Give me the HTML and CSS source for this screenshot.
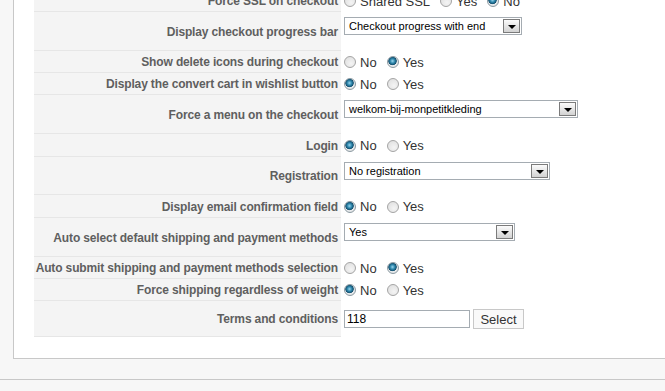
FILE: index.html
```html
<!DOCTYPE html>
<html lang="en">
<head>
  <meta charset="UTF-8">
  <title>Checkout configuration</title>
  <link rel="stylesheet" href="styles.css">
</head>
<body>
  <div class="panel">
    <div class="form">
      <div class="row row-radio">
        <div class="key">Force SSL on checkout</div>
        <div class="value">
          <label class="opt"><input type="radio" name="ssl"> Shared SSL</label>
          <label class="opt"><input type="radio" name="ssl"> Yes</label>
          <label class="opt"><input type="radio" name="ssl" checked> No</label>
        </div>
      </div>
      <div class="row row-select">
        <div class="key">Display checkout progress bar</div>
        <div class="value">
          <span class="select" style="width: 178px"><span class="select-text">Checkout progress with end</span><span class="select-btn"></span></span>
        </div>
      </div>
      <div class="row row-radio">
        <div class="key">Show delete icons during checkout</div>
        <div class="value">
          <label class="opt"><input type="radio" name="delete"> No</label>
          <label class="opt"><input type="radio" name="delete" checked> Yes</label>
        </div>
      </div>
      <div class="row row-radio">
        <div class="key">Display the convert cart in wishlist button</div>
        <div class="value">
          <label class="opt"><input type="radio" name="wishlist" checked> No</label>
          <label class="opt"><input type="radio" name="wishlist"> Yes</label>
        </div>
      </div>
      <div class="row row-select">
        <div class="key">Force a menu on the checkout</div>
        <div class="value">
          <span class="select" style="width: 234px"><span class="select-text">welkom-bij-monpetitkleding</span><span class="select-btn"></span></span>
        </div>
      </div>
      <div class="row row-radio row-loose">
        <div class="key">Login</div>
        <div class="value">
          <label class="opt"><input type="radio" name="login" checked> No</label>
          <label class="opt"><input type="radio" name="login"> Yes</label>
        </div>
      </div>
      <div class="row row-select row-short">
        <div class="key">Registration</div>
        <div class="value">
          <span class="select" style="width: 206px"><span class="select-text">No registration</span><span class="select-btn"></span></span>
        </div>
      </div>
      <div class="row row-radio row-loose">
        <div class="key">Display email confirmation field</div>
        <div class="value">
          <label class="opt"><input type="radio" name="email" checked> No</label>
          <label class="opt"><input type="radio" name="email"> Yes</label>
        </div>
      </div>
      <div class="row row-select">
        <div class="key">Auto select default shipping and payment methods</div>
        <div class="value">
          <span class="select" style="width: 171px"><span class="select-text">Yes</span><span class="select-btn"></span></span>
        </div>
      </div>
      <div class="row row-radio">
        <div class="key">Auto submit shipping and payment methods selection</div>
        <div class="value">
          <label class="opt"><input type="radio" name="autosubmit"> No</label>
          <label class="opt"><input type="radio" name="autosubmit" checked> Yes</label>
        </div>
      </div>
      <div class="row row-radio">
        <div class="key">Force shipping regardless of weight</div>
        <div class="value">
          <label class="opt"><input type="radio" name="weight" checked> No</label>
          <label class="opt"><input type="radio" name="weight"> Yes</label>
        </div>
      </div>
      <div class="row row-terms">
        <div class="key">Terms and conditions</div>
        <div class="value">
          <input class="text" type="text" value="118">
          <button class="btn" type="button">Select</button>
        </div>
      </div>
    </div>
  </div>
  <div class="toolbar"></div>
</body>
</html>
```

FILE: styles.css
```css
* {
  box-sizing: border-box;
}
html, body {
  margin: 0;
  padding: 0;
  overflow: hidden;
}
body {
  font-family: "Liberation Sans", Arial, sans-serif;
  font-size: 13px;
  color: #333;
  background: #f7f7f7;
}
.panel {
  margin-left: 13px;
  background: #fff;
  border-left: 1px solid #c8c8c8;
  border-bottom: 1px solid #c8c8c8;
  padding: 0 0 21px 20px;
}
.form {
  margin-top: -10px;
}
.row {
  display: grid;
  grid-template-columns: 307px 1fr;
}
.row-radio {
  height: 22px;
}
.row-loose {
  height: 23px;
}
.row-select {
  height: 39px;
}
.row-short {
  height: 38px;
}
.row-terms {
  height: 36px;
}
.key {
  background: #f4f4f4;
  border-bottom: 1px solid #e6e6e6;
  color: #5f5f5f;
  font-weight: bold;
  font-size: 12px;
  letter-spacing: -0.14px;
  text-align: right;
  padding-right: 3px;
  padding-top: 1px;
  display: flex;
  align-items: center;
  justify-content: flex-end;
  white-space: nowrap;
}
.value {
  padding-left: 3px;
  display: flex;
  align-items: center;
  gap: 10px;
}
.row-select .value {
  align-items: flex-start;
  padding-top: 5px;
}
.opt {
  display: inline-flex;
  align-items: center;
  gap: 4px;
  font-size: 13px;
  color: #333;
}
.opt input {
  appearance: none;
  -webkit-appearance: none;
  width: 12px;
  height: 12px;
  margin: 0;
  border-radius: 50%;
  border: 1px solid #a4a4a4;
  background: radial-gradient(circle at 60% 65%, #f4f4f4 0, #dcdcdc 100%);
}
.opt input:checked {
  border-color: #8c9aa2;
  background: radial-gradient(circle at 45% 40%, #9ad6ee 0, #2d86ab 28%, #14506f 48%, #e9ecee 56%, #d8d8d8 100%);
}
.select {
  display: inline-flex;
  align-items: center;
  height: 18px;
  border: 1px solid #a5acb2;
  background: #fff;
  font-size: 11px;
  color: #000;
  padding: 0 1px 0 4px;
}
.select-text {
  flex: 1;
}
.select-btn {
  width: 17px;
  height: 14px;
  border: 1px solid #7b7b7b;
  background: linear-gradient(#fbfbfb, #d2d2d2);
  display: flex;
  align-items: center;
  justify-content: center;
}
.select-btn::after {
  content: "";
  border-left: 4px solid transparent;
  border-right: 4px solid transparent;
  border-top: 4px solid #000;
  margin-top: 2px;
}
.text {
  width: 126px;
  height: 18px;
  border: 1px solid #a5acb2;
  padding: 0 2px;
  font-family: "Liberation Sans", Arial, sans-serif;
  font-size: 12px;
  color: #000;
}
.btn {
  width: 51px;
  height: 20px;
  margin-left: -7px;
  border: 1px solid #c8c8c8;
  background: #f9f9f9;
  font-family: "Liberation Sans", Arial, sans-serif;
  font-size: 13px;
  color: #333;
  padding: 0;
}
.toolbar {
  height: 21px;
  border-bottom: 1px solid #c8c8c8;
}
```
